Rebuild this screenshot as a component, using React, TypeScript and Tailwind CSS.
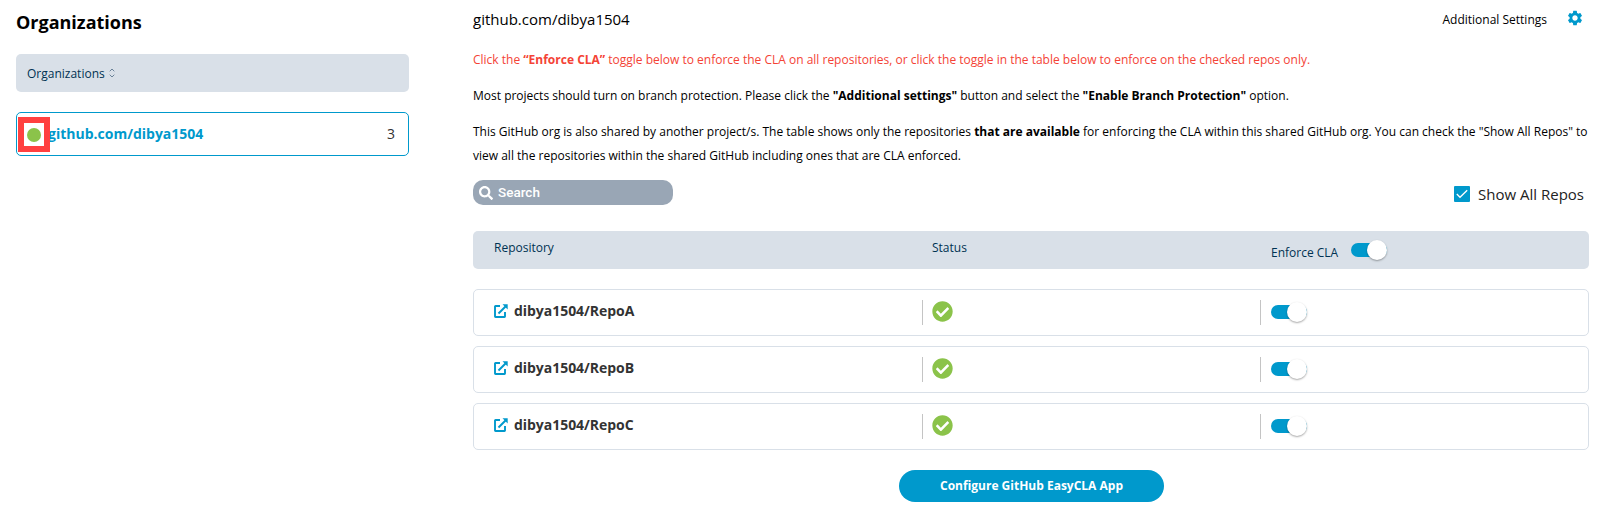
import React from "react";
import { MdSettings } from "react-icons/md";
import { FaSearch, FaCheckCircle } from "react-icons/fa";

function Toggle() {
  return (
    <span className="relative block h-[14px] w-9 rounded-full bg-[#0099cc]">
      <span className="absolute -top-[3px] left-4 size-5 rounded-full bg-white shadow-[0_1px_2px_rgba(0,0,0,0.35)]" />
    </span>
  );
}

function ExternalLink() {
  return (
    <svg width="14" height="14" viewBox="0 0 14 14" fill="none" stroke="#0099cc" className="shrink-0">
      <path d="M6 2H1.500a.5.5 0 0 0-.5.5v10a.5.5 0 0 0 .5.5h9a.5.5 0 0 0 .5-.5V8" strokeWidth="1.900" />
      <path d="M4.500 9.500 11.500 2.500" strokeWidth="2" />
      <path d="M8.500 .3H13.700V5.500Z" fill="#0099cc" stroke="none" />
    </svg>
  );
}

const repos = ["dibya1504/RepoA", "dibya1504/RepoB", "dibya1504/RepoC"];

export default function App() {
  return (
    <div className="flex h-[521px] w-[1615px] overflow-hidden bg-white font-['Open_Sans',sans-serif] text-black">
      <aside className="ml-4 w-[393px] shrink-0">
        <h2 className="mt-[10px] text-[18px] leading-6 font-bold">Organizations</h2>
        <div className="mt-5 flex h-[38px] items-center gap-1 rounded-[5px] bg-[#d9e0e8] px-[11px] text-xs text-[#003252]">
          <span className="pt-[2px]">Organizations</span>
          <svg width="6" height="10" viewBox="0 0 6 10" fill="none" stroke="#6b8298" strokeWidth="1">
            <path d="M.7 3.300 3 1l2.300 2.300M.7 6.700 3 9l2.300-2.300" />
          </svg>
        </div>
        <div className="relative mt-5 flex h-11 items-center rounded-[5px] border border-[#0099cc] pr-[13px] pb-[2px] pl-[31px]">
          <span className="text-[14px] font-bold text-[#0099cc]">github.com/dibya1504</span>
          <span className="ml-auto pt-[2px] text-sm text-[#333]">3</span>
          <span className="absolute top-1 left-[1px] flex h-[35px] w-8 items-center justify-center border-6 border-[#ff4040] bg-white">
            <span className="size-[14px] shrink-0 rounded-full bg-[#8bc34a]" />
          </span>
        </div>
      </aside>

      <main className="ml-16 w-[1116px] shrink-0">
        <header className="mt-[7px] flex h-6 items-center">
          <span className="pb-px text-[15px] leading-6">github.com/dibya1504</span>
          <span className="mr-[19px] ml-auto pt-px text-xs">Additional Settings</span>
          <MdSettings className="mr-[5px] -mt-[2px] size-[18px] text-[#0099cc]" />
        </header>
        <p className="mt-[17px] text-xs leading-6 text-[#f44336]">
          Click the <b>“Enforce CLA”</b> toggle below to enforce the CLA on all repositories, or click the toggle in the table below to enforce on the checked repos only.
        </p>
        <p className="mt-3 text-xs leading-6">
          Most projects should turn on branch protection. Please click the <b>"Additional settings"</b> button and select the <b>"Enable Branch Protection"</b> option.
        </p>
        <p className="mt-3 text-xs leading-6">
          <span className="block whitespace-nowrap">
            This GitHub org is also shared by another project/s. The table shows only the repositories <b>that are available</b> for enforcing the CLA within this shared GitHub org. You can check the "Show All Repos" to
          </span>
          <span className="block">view all the repositories within the shared GitHub including ones that are CLA enforced.</span>
        </p>

        <div className="mt-3 flex h-[25px]">
          <div className="flex h-[25px] w-[200px] items-center gap-[5px] rounded-[10px] bg-[#99a6b5] pl-[6px] font-['Roboto',sans-serif] text-[13.5px] font-medium text-white">
            <FaSearch className="size-[14px]" />
            <span>Search</span>
          </div>
          <label className="mt-[2px] mr-[5px] ml-auto flex h-6 items-center gap-2 text-[15px]">
            <span className="flex size-4 items-center justify-center rounded-[1px] bg-[#0099cc]">
              <svg width="12" height="10" viewBox="0 0 12 10" fill="none" stroke="#fff" strokeWidth="1.300">
                <path d="M.8 5 4 8.300 11.200 1.200" />
              </svg>
            </span>
            <span className="pt-px text-[#222]">Show All Repos</span>
          </label>
        </div>

        <div className="mt-[26px] grid h-[38px] grid-cols-[459px_339px_1fr] rounded-[5px] bg-[#d9e0e8] text-xs leading-[18px] text-[#003252]">
          <span className="pt-2 pl-[21px]">Repository</span>
          <span className="pt-2">Status</span>
          <span className="flex items-start">
            <span className="mt-[13px] w-20">Enforce CLA</span>
            <span className="mt-3">
              <Toggle />
            </span>
          </span>
        </div>

        <div className="mt-5 flex flex-col gap-[10px]">
          {repos.map((name) => (
            <div key={name} className="grid h-[47px] grid-cols-[448px_338px_1fr] items-start rounded-[5px] border border-[#d9e0e8]">
              <div className="mt-[9px] flex h-6 items-center gap-[6px] pl-5">
                <ExternalLink />
                <span className="-mt-px text-sm font-bold tracking-[-0.04px] text-[#333]">{name}</span>
              </div>
              <div className="mt-[10px] flex h-[25px] items-start border-l border-[#c4c4c4] pt-[1px] pl-[9px]">
                <FaCheckCircle className="size-[21px] text-[#8bc34a]" />
              </div>
              <div className="mt-[10px] flex h-[25px] items-start border-l border-[#c4c4c4] pt-[5px] pl-[10px]">
                <Toggle />
              </div>
            </div>
          ))}
        </div>

        <button className="mt-5 ml-[426px] flex h-8 w-[265px] items-center justify-center rounded-full bg-[#0099cc] text-xs font-bold text-white">
          Configure GitHub EasyCLA App
        </button>
      </main>
    </div>
  );
}
